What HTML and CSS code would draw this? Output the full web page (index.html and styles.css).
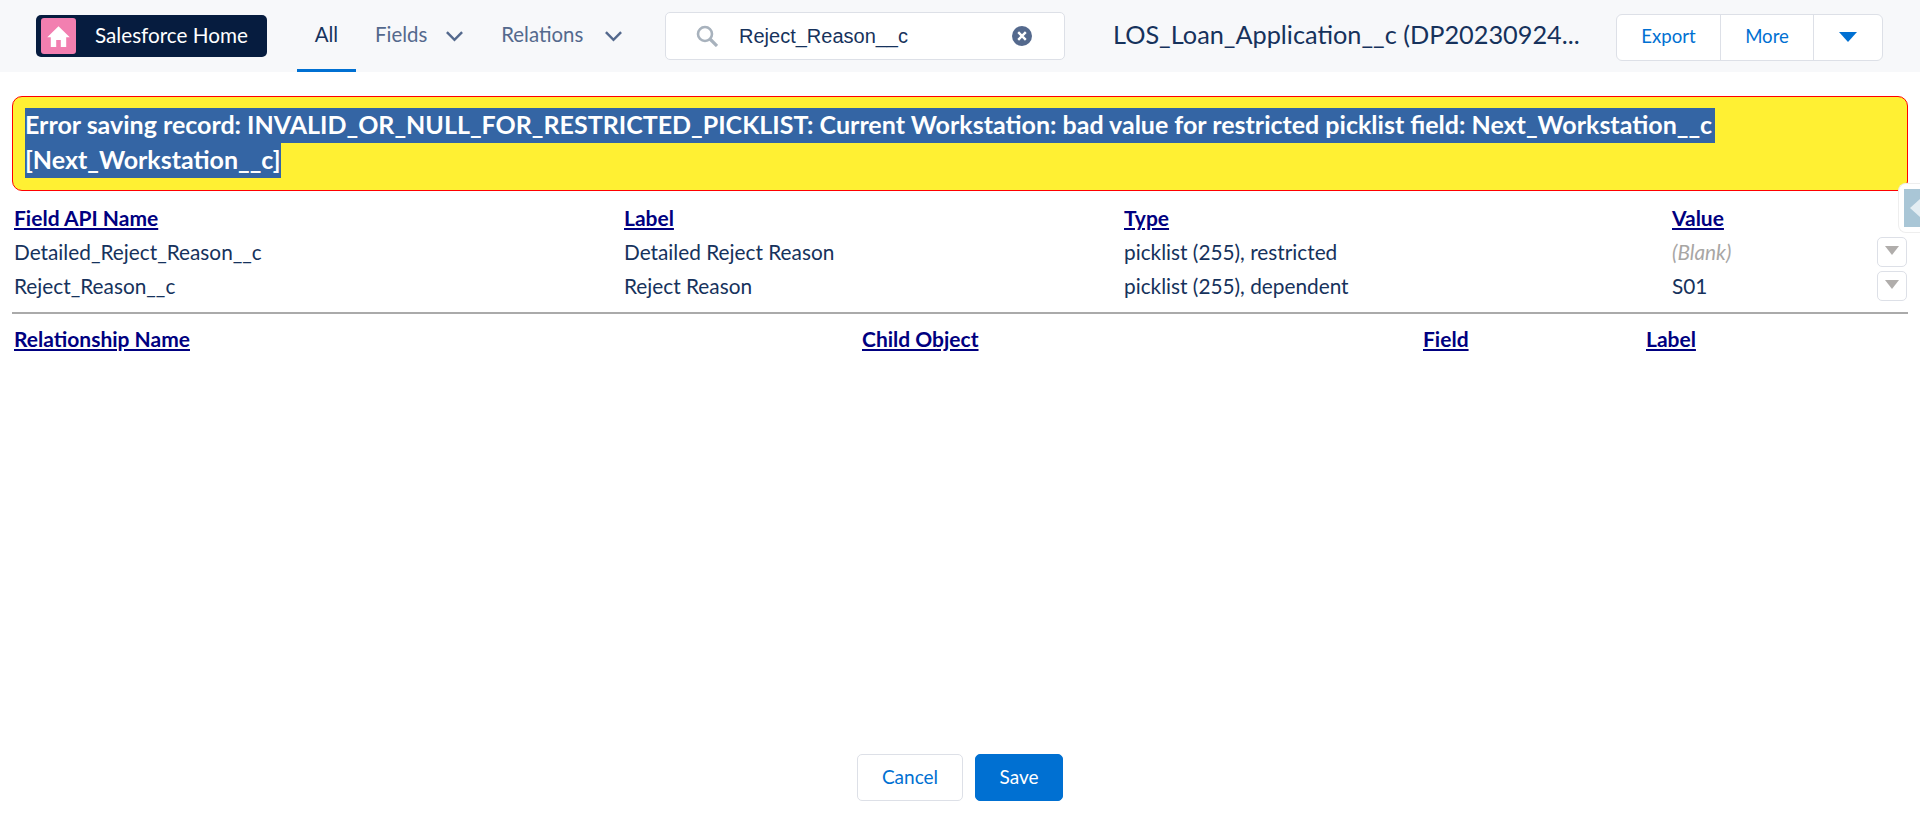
FILE: index.html
```html
<!DOCTYPE html>
<html lang="en">
<head>
<meta charset="utf-8">
<title>Salesforce Inspector</title>
<link rel="stylesheet" href="styles.css">
</head>
<body>
<div class="page">
  <header class="top">
    <a class="home">
      <span class="home-icon"><svg viewBox="0 0 24 24" width="25" height="25"><path fill="#fff" d="M12 2.2 1.2 12.6h3.4V22h5.2v-6.6h4.4V22h5.2v-9.4h3.4z"/></svg></span>
      <span class="home-text">Salesforce Home</span>
    </a>
    <nav class="tabs">
      <a class="tab tab-all">All</a>
      <a class="tab tab-fields">Fields<svg class="chev" viewBox="0 0 20 12" width="19" height="12"><path d="M2 2l8 8 8-8" fill="none" stroke="#54698d" stroke-width="2.6"/></svg></a>
      <a class="tab tab-rel">Relations<svg class="chev" viewBox="0 0 20 12" width="19" height="12"><path d="M2 2l8 8 8-8" fill="none" stroke="#54698d" stroke-width="2.6"/></svg></a>
    </nav>
    <div class="search">
      <svg class="search-icon" viewBox="0 0 22 22" width="22" height="22"><circle cx="9" cy="9" r="7" fill="none" stroke="#a8b2bd" stroke-width="2.6"/><path d="M14 14l7 7" stroke="#a8b2bd" stroke-width="3.2"/></svg>
      <span class="search-text">Reject_Reason__c</span>
      <svg class="clear-icon" viewBox="0 0 20 20" width="20" height="20"><circle cx="10" cy="10" r="10" fill="#54698d"/><path d="M6.2 6.2l7.6 7.6M13.8 6.2l-7.6 7.6" stroke="#fff" stroke-width="2.4"/></svg>
    </div>
    <div class="title">LOS_Loan_Application__c (DP20230924...</div>
    <div class="btn-group">
      <a class="gbtn gbtn-export">Export</a>
      <a class="gbtn gbtn-more">More</a>
      <a class="gbtn gbtn-caret"><span class="caret"></span></a>
    </div>
  </header>

  <main class="content">
    <div class="error">
      <span class="sel sel-first">Error saving record: INVALID_OR_NULL_FOR_RESTRICTED_PICKLIST: Current Workstation: bad value for restricted picklist field: Next_Workstation__c</span>
      <span class="sel">[Next_Workstation__c]</span>
    </div>

    <div class="grid fields">
      <a class="th">Field API Name</a><a class="th">Label</a><a class="th">Type</a><a class="th">Value</a>
      <div class="td">Detailed_Reject_Reason__c</div><div class="td">Detailed Reject Reason</div><div class="td">picklist (255), restricted</div><div class="td td-value blank">(Blank)<button class="drop"><span class="drop-tri"></span></button></div>
      <div class="td">Reject_Reason__c</div><div class="td">Reject Reason</div><div class="td">picklist (255), dependent</div><div class="td td-value">S01<button class="drop"><span class="drop-tri"></span></button></div>
    </div>

    <hr class="sep">

    <div class="grid rels">
      <a class="th">Relationship Name</a><a class="th">Child Object</a><a class="th">Field</a><a class="th">Label</a>
    </div>
  </main>

  <footer class="foot">
    <button class="btn btn-cancel">Cancel</button>
    <button class="btn btn-save">Save</button>
  </footer>

  <div class="side-tab"><span class="side-inner"><span class="side-tri"></span></span></div>
</div>
</body>
</html>
```
FILE: styles.css
```css
* { box-sizing: border-box; }
html, body { margin: 0; padding: 0; height: 100%; overflow: hidden; }
body { font-family: Lato, "Open Sans", sans-serif; color: #16325c; background: #fff; }
.page { position: relative; height: 825px; display: flex; flex-direction: column; }

.top { height: 72px; background: #f7f8fa; display: flex; align-items: center; padding-left: 36px; flex: none; }
.home { width: 231px; height: 42px; background: #061c3f; border-radius: 5px; display: flex; align-items: center; padding-left: 5px; }
.home-icon { width: 35px; height: 36px; background: #f27fb0; border-radius: 3px; display: flex; align-items: center; justify-content: center; }
.home-text { margin-left: 19px; color: #fff; font-size: 20.7px; padding-bottom: 2px; }

.tabs { display: flex; height: 72px; margin-left: 30px; width: 368px; }
.tab { display: flex; align-items: center; font-size: 20.4px; color: #54698d; height: 72px; padding-bottom: 4px; }
.tab-all { width: 59px; justify-content: center; color: #16325c; border-bottom: 3px solid #0070d2; padding-bottom: 1px; }
.tab-fields { margin-left: 19px; }
.tab-rel { margin-left: 37px; }
.chev { margin-left: 18px; margin-top: 4px; }
.tab-rel .chev { margin-left: 21px; }

.search { width: 400px; height: 48px; background: #fff; border: 1px solid #dde0e7; border-radius: 5px; display: flex; align-items: center; padding-left: 30px; }
.search-text { font-family: "Liberation Sans", Arial, sans-serif; font-size: 20px; margin-left: 21px; flex: 1; }
.clear-icon { margin-right: 32px; }

.title { margin-left: 48px; width: 503px; font-size: 25.3px; padding-bottom: 5px; white-space: nowrap; }
.btn-group { width: 267px; height: 47px; background: #fff; border: 1px solid #dde0e7; border-radius: 6px; display: flex; margin-top: 2px; }
.gbtn { display: flex; align-items: center; justify-content: center; color: #0070d2; font-size: 18.6px; border-right: 1px solid #dde0e7; padding-bottom: 2px; }
.gbtn-export { width: 104px; }
.gbtn-more { width: 93px; }
.gbtn-caret { flex: 1; border-right: 0; padding-bottom: 0; }
.caret { width: 0; height: 0; border-left: 9px solid transparent; border-right: 9px solid transparent; border-top: 10px solid #0070d2; }

.content { padding: 24px 12px 0; flex: 1; }
.error { height: 95px; background: #fff033; border: 1px solid #f00; border-radius: 10px; padding: 11px 12px; color: #fff; font-size: 25px; font-weight: 700; line-height: 32px; }
.sel { display: block; width: fit-content; height: 35px; background: #3465a4; white-space: nowrap; }
.sel-first { padding-right: 3px; }

.grid { display: grid; padding-left: 2px; }
.fields { grid-template-columns: 610px 500px 548px 1fr; grid-auto-rows: 34px; align-items: center; margin-top: 10px; margin-bottom: 1px; }
.rels { grid-template-columns: 848px 561px 223px 1fr; margin-top: 8px; }
.th { color: #000080; font-size: 21px; font-weight: 700; text-decoration: underline; line-height: 34px; justify-self: start; }
.td { font-size: 20.8px; line-height: 34px; white-space: nowrap; }
.td-value { display: flex; align-items: center; justify-content: space-between; padding-right: 1px; }
.blank { color: #a8a6a4; font-style: italic; }
.drop { width: 30px; height: 30px; padding: 0; background: #fff; border: 1px solid #dde0e7; border-radius: 5px; display: flex; align-items: center; justify-content: center; }
.drop-tri { width: 0; height: 0; border-left: 7px solid transparent; border-right: 7px solid transparent; border-top: 9px solid #b0adab; margin-top: -3px; }
.sep { margin: 9px 0 0; height: 2px; border: 0; background: #aaa; }

.foot { flex: none; display: flex; justify-content: flex-start; padding: 0 0 24px 857px; gap: 12px; }
.btn { height: 47px; font-family: inherit; font-size: 19px; border-radius: 5px; padding: 0 0 2px; }
.btn-cancel { width: 106px; background: #fff; border: 1px solid #dde0e7; color: #0070d2; }
.btn-save { width: 88px; background: #0070d2; border: 1px solid #0070d2; color: #fff; }

.side-tab { position: absolute; right: 0; top: 183px; width: 22px; height: 50px; background: #fff; border: 1px solid #eee; border-right: 0; border-radius: 8px 0 0 8px; padding: 5px 0 5px 5px; }
.side-inner { display: flex; align-items: center; justify-content: flex-end; height: 38px; background: #a9c6d6; }
.side-tri { width: 0; height: 0; border-top: 9px solid transparent; border-bottom: 9px solid transparent; border-right: 10px solid #e4eef3; }
```
